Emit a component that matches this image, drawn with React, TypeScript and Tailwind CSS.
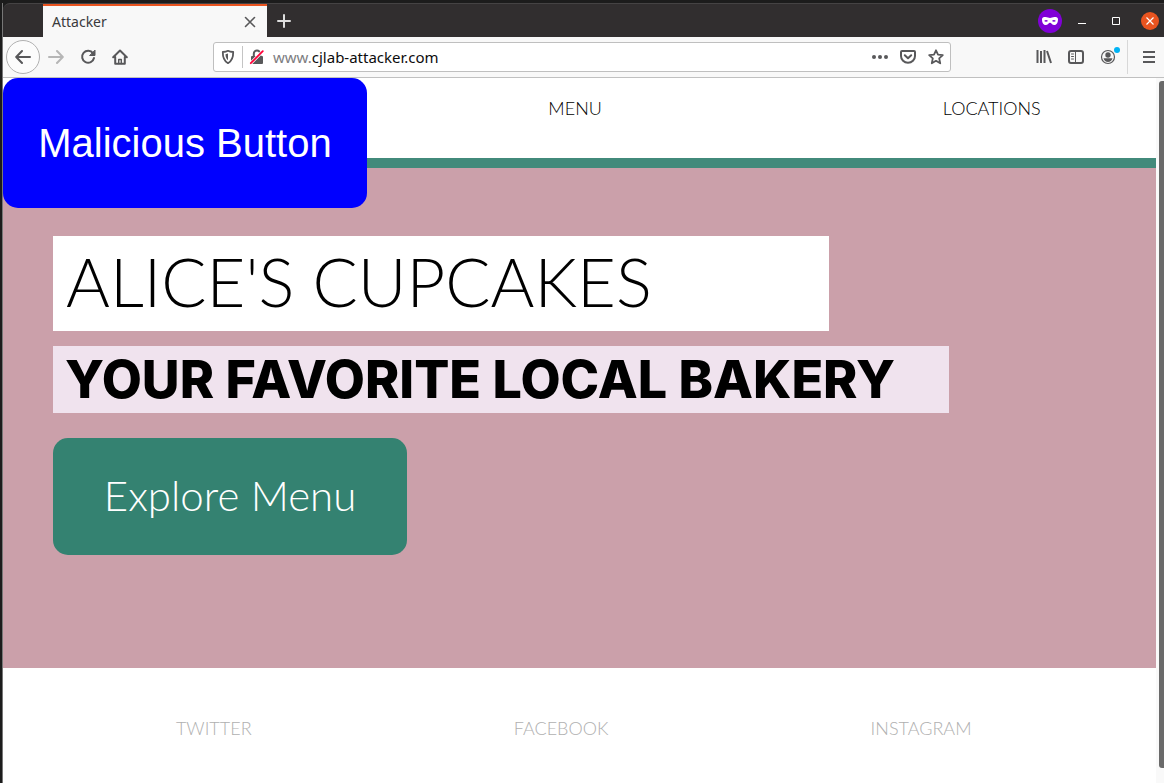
import React from "react";

const iconColor = "text-[#58585a]";

function Icon({ children, className = "" }: { children: React.ReactNode; className?: string }) {
  return (
    <svg viewBox="0 0 16 16" className={`size-4 shrink-0 ${className}`} fill="none" stroke="currentColor" strokeWidth="2" strokeLinecap="round" strokeLinejoin="round" aria-hidden="true">
      {children}
    </svg>
  );
}

function TabStrip() {
  return (
    <header className="flex h-[34px] items-stretch rounded-tl-[7px] border-t border-[#454344] bg-[#312e2f]">
      <div className="w-10" />
      <div className="flex w-[224px] items-center justify-between border-t-2 border-[#e95420] bg-[#f8f8f8] pr-[11px] pl-[9px]">
        <span className="text-sm text-[#3a3a3c]">Attacker</span>
        <button aria-label="Close tab" className="text-[#58585a]">
          <svg viewBox="0 0 12 12" className="size-3" stroke="currentColor" strokeWidth="1.6" strokeLinecap="round"><path d="M1.5 1.5l9 9M10.500 1.500l-9 9" /></svg>
        </button>
      </div>
      <button aria-label="New tab" className="flex w-[34px] items-center justify-center text-[#dedede]">
        <svg viewBox="0 0 14 14" className="size-[14px]" stroke="currentColor" strokeWidth="2" strokeLinecap="round"><path d="M7 1v12M1 7h12" /></svg>
      </button>
      <div className="ml-auto flex items-center pr-[5px]">
        <svg viewBox="0 0 24 24" className="mr-[16px] size-6" role="img" aria-label="Private browsing">
          <circle cx="12" cy="12" r="12" fill="#8000d7" />
          <path fillRule="evenodd" fill="#fff" d="M4 10.200C4 8.600 5.300 8 7.500 8c2 0 3 .9 4.500.9S14.500 8 16.500 8c2.200 0 3.500.6 3.500 2.200 0 3-1.200 5.800-3.700 5.800-2.100 0-2.900-2.300-4.300-2.300S9.800 16 7.700 16C5.200 16 4 13.200 4 10.200zM6.200 11.900c.8 1 2.800 1 3.800 0-.8-1.200-3-1.200-3.800 0zM14 11.900c1 1 3 1 3.800 0-.8-1.200-3-1.200-3.800 0z" />
        </svg>
        <button aria-label="Minimize" className="mr-[26px] text-white">
          <svg viewBox="0 0 8 12" className="h-3 w-2"><path d="M0 8.500h8" stroke="currentColor" /></svg>
        </button>
        <button aria-label="Maximize" className="mr-[21px] text-white">
          <svg viewBox="0 0 8 8" className="size-2"><path d="M.5.500h7v7h-7z" fill="none" stroke="currentColor" /></svg>
        </button>
        <button aria-label="Close window" className="flex size-[18px] items-center justify-center rounded-full bg-[#e95420] text-white">
          <svg viewBox="0 0 8 8" className="size-2" stroke="currentColor" strokeWidth="1.200"><path d="M.5.500l7 7M7.500.500l-7 7" /></svg>
        </button>
      </div>
    </header>
  );
}

function Toolbar() {
  return (
    <div className={`flex h-[41px] items-center border-b border-[#c0c0c0] bg-[#f8f8f8] pl-[3px] ${iconColor}`}>
      <button aria-label="Back" className="flex size-[34px] items-center justify-center rounded-full border border-[#b1b1b1] bg-[#fcfcfc]">
        <Icon><path d="M15 8H1.500M7 2L1.200 8 7 14" /></Icon>
      </button>
      <button aria-label="Forward" className="ml-2 text-[#b6b6b6]">
        <Icon><path d="M1 8h13.500M9 2l5.800 6L9 14" /></Icon>
      </button>
      <button aria-label="Reload" className="ml-4">
        <Icon><path d="M13 4.200A6 6 0 1 0 14 9" /><path d="M15 1.500V6.500H10z" fill="currentColor" strokeWidth="1" /></Icon>
      </button>
      <button aria-label="Home" className="ml-4">
        <Icon><path d="M1.200 8.200L8 1.500l6.800 6.700M3.200 8v6.800h9.600V8" /><path d="M6.700 14.500v-4h2.600v4" strokeWidth="1.400" /></Icon>
      </button>
      <div className="ml-[85px] flex h-[30px] w-[738px] shrink items-center rounded-[3px] border border-[#bfbfbf] bg-white px-[6px]">
        <button aria-label="Tracking protection">
          <Icon><path d="M8 1.800c1.700.9 3.500 1.100 5.200 1.200C13.300 8.500 12 12 8 14.200 4 12 2.700 8.500 2.800 3 4.500 2.900 6.300 2.700 8 1.800z" strokeWidth="1.800" /><path d="M8 4.600v6.600C6 9.500 5.600 7.500 5.500 5.200z" fill="currentColor" stroke="none" /></Icon>
        </button>
        <div className="mx-[6px] h-[22px] w-px bg-[#c4c4c4]" />
        <button aria-label="Connection is not secure">
          <Icon><path d="M4.800 7V4.700a3.200 3.200 0 0 1 6.400 0V7" /><rect x="2" y="7" width="12" height="8" rx="1" fill="currentColor" stroke="none" /><path d="M1 15L14.400 1.600" stroke="#fff" strokeWidth="3.200" strokeLinecap="butt" /><path d="M1.800 14.200L13.800 2.200" stroke="#ff0039" strokeWidth="1.800" /></Icon>
        </button>
        <div className="relative ml-2 flex h-6 min-w-0 flex-1 items-center text-[15px]">
          <input aria-label="Address" defaultValue="www.cjlab-attacker.com" className="h-6 w-full min-w-0 bg-transparent text-[#0c0c0d] outline-none" />
          <span aria-hidden="true" className="pointer-events-none absolute left-0 bg-white text-[#7d7d7f]">www.</span>
        </div>
        <button aria-label="Page actions" className="ml-2">
          <Icon><g fill="currentColor" stroke="none"><circle cx="2" cy="8" r="2" /><circle cx="8" cy="8" r="2" /><circle cx="14" cy="8" r="2" /></g></Icon>
        </button>
        <button aria-label="Save to Pocket" className="ml-3">
          <Icon><path d="M2 2h12a1 1 0 0 1 1 1v4a7 6.800 0 0 1-14 0V3a1 1 0 0 1 1-1z" /><path d="M4.800 6.200L8 9.200l3.200-3" /></Icon>
        </button>
        <button aria-label="Bookmark this page" className="ml-3">
          <Icon><path d="M8 1.300l2 4.400 4.800.500-3.600 3.200 1 4.900L8 11.800l-4.200 2.500 1-4.900L1.200 6.200 6 5.700z" strokeWidth="1.800" /></Icon>
        </button>
      </div>
      <div className="ml-auto flex h-full items-center">
        <button aria-label="Library">
          <Icon><path d="M1.500 1v13M5 2v12M8.500 1v13M11 2l4 12" strokeLinecap="butt" /></Icon>
        </button>
        <button aria-label="Sidebars" className="ml-4">
          <Icon><rect x="1" y="2" width="14" height="12" rx="2" /><path d="M7.500 2v12M3.500 5h2M3.500 7.500h2M3.500 10h2" strokeWidth="1" /></Icon>
        </button>
        <button aria-label="Account" className="relative ml-4">
          <Icon><circle cx="8" cy="8" r="6.500" strokeWidth="1.200" /><circle cx="8" cy="6" r="2.700" fill="currentColor" stroke="none" /><path d="M3.500 9.300h9C12 11.700 10.200 13 8 13s-4-1.300-4.500-3.700z" fill="currentColor" stroke="none" /></Icon>
          <span className="absolute -top-0.5 -right-1 size-[6px] rounded-full bg-[#00b3f4]" />
        </button>
        <div className="ml-[11px] h-[34px] w-px bg-[#d8d8d8]" />
        <button aria-label="Open menu" className="mr-[7px] ml-[13px]">
          <Icon><path d="M2 3h12M2 8h12M2 13h12" strokeLinecap="butt" /></Icon>
        </button>
      </div>
    </div>
  );
}

function BakeryPage() {
  return (
    <main className="relative flex min-w-0 flex-1 flex-col bg-white font-['Lato',sans-serif] font-light">
      <nav className="flex h-[90px] justify-between border-b-10 border-[#428a7b] pt-4 pr-[10%] pl-[47.300%] text-lg text-black">
        <a href="#menu">MENU</a>
        <a href="#locations">LOCATIONS</a>
      </nav>
      <section className="flex h-[500px] flex-col items-start bg-[#cba0aa] px-[50px] pt-[68px]">
        <h1 className="flex h-[95px] w-[776px] max-w-full items-center bg-white pb-1 pl-[13px] text-[67px] leading-none whitespace-nowrap">ALICE'S CUPCAKES</h1>
        <h2 className="mt-[15px] flex h-[67px] w-[896px] max-w-full items-center bg-[#f0e3ee] pl-[12px] font-['Inter',sans-serif] text-[52px] leading-none font-extrabold whitespace-nowrap">YOUR FAVORITE LOCAL BAKERY</h2>
        <button className="mt-[25px] h-[117px] w-[354px] rounded-[15px] bg-[#348271] pb-0.5 text-[42px] text-white">Explore Menu</button>
      </section>
      <footer className="flex flex-1 justify-between pt-[46px] pr-[16%] pb-10 pl-[15%] text-lg text-[#b0b0b0]">
        <a href="#twitter">TWITTER</a>
        <a href="#facebook">FACEBOOK</a>
        <a href="#instagram">INSTAGRAM</a>
      </footer>
      <button className="absolute top-0 left-0 h-[130px] w-[364px] rounded-[15px] bg-[#0000ff] font-['Liberation_Sans',sans-serif] text-[40px] font-normal text-white">Malicious Button</button>
    </main>
  );
}

export default function App() {
  return (
    <div className="flex min-h-screen flex-col bg-[#1c1c1c] pt-[3px] pl-[2px] font-['Noto_Sans',sans-serif]">
      <div className="flex flex-1 flex-col border-l border-[#777]">
        <TabStrip />
        <Toolbar />
        <div className="flex flex-1">
          <BakeryPage />
          <div className="flex w-2 flex-col bg-[#f9f9f9] pt-[3px] pb-[15px] pl-[3px]">
            <div className="flex-1 rounded-l-[3px] bg-[#6a6a6a]" />
          </div>
        </div>
      </div>
    </div>
  );
}
